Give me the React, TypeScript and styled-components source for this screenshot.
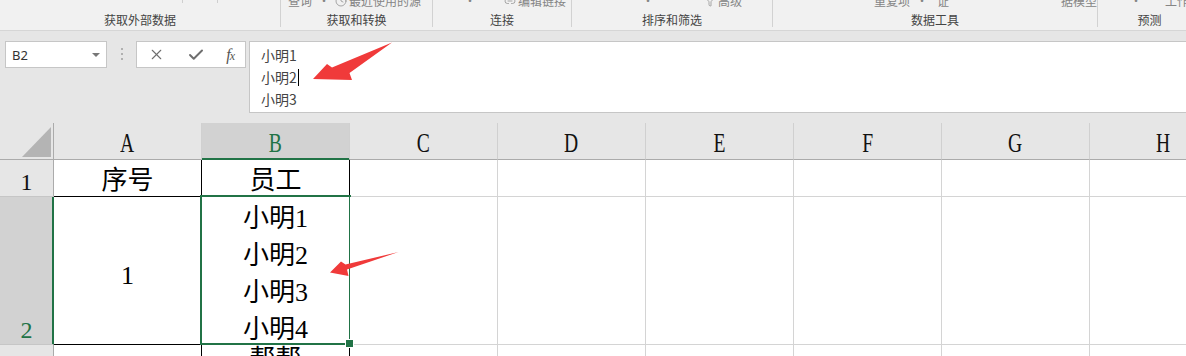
import React from "react";
import styled, { createGlobalStyle } from "styled-components";
import { X, Check, Clock, Link2, Filter } from "lucide-react";

const CJK = `"Noto Sans CJK SC", "Noto Sans", sans-serif`;
const UI = `"Noto Sans", "Noto Sans CJK SC", sans-serif`;
const SERIF = `"Liberation Serif", "Noto Sans CJK SC", serif`;
const GREEN = "#217346";

const GlobalStyle = createGlobalStyle`
  html, body { margin: 0; padding: 0; overflow: hidden; background: #e6e6e6; }
  #root { width: 1186px; height: 356px; overflow: hidden; }
  * { box-sizing: border-box; }
`;

const Page = styled.div`
  position: relative;
  width: 1186px;
  height: 356px;
  overflow: hidden;
  background: #e6e6e6;
  display: flex;
  flex-direction: column;
`;

/* ---------- Ribbon ---------- */
const Ribbon = styled.div`
  display: flex;
  height: 31px;
  flex-shrink: 0;
  background: #f1f1f1;
  border-bottom: 1px solid #d6d6d6;
`;

const Group = styled.div<{ $w?: number }>`
  ${(p) => (p.$w ? `width: ${p.$w}px; flex-shrink: 0;` : `flex: 1;`)}
  height: 27px;
  display: flex;
  flex-direction: column;
  border-right: ${(p) => (p.$w ? "1px solid #d2d2d2" : "none")};
`;

const TopRow = styled.div`
  height: 8px;
  overflow: hidden;
  display: flex;
  align-items: flex-end;
`;

const TopItem = styled.span<{ $ml: number }>`
  margin-left: ${(p) => p.$ml}px;
  flex-shrink: 0;
  display: flex;
  align-items: center;
  gap: 2px;
  font: 12px/14px ${CJK};
  color: #858585;
  white-space: nowrap;
`;

const TopTick = styled.span<{ $ml: number }>`
  margin-left: ${(p) => p.$ml}px;
  align-self: flex-start;
  width: 1px;
  height: 3px;
  background: #cfcfcf;
  flex-shrink: 0;
`;

const GroupLabel = styled.div`
  margin-top: 4px;
  font: 12px/15px ${CJK};
  color: #444;
  text-align: center;
  white-space: nowrap;
`;

/* ---------- Formula bar ---------- */
const FormulaArea = styled.div`
  display: flex;
  align-items: flex-start;
  height: 92px;
  flex-shrink: 0;
  padding: 10px 0 10px 5px;
`;

const NameBox = styled.div`
  width: 102px;
  height: 27px;
  background: #fff;
  border: 1px solid #c6c6c6;
  display: flex;
  align-items: center;
  justify-content: space-between;
  padding: 0 6px;
  font: 13px ${UI};
  color: #333;
`;

const Caret = styled.span`
  width: 0;
  height: 0;
  border-left: 4px solid transparent;
  border-right: 4px solid transparent;
  border-top: 4px solid #777;
`;

const Dots = styled.div`
  margin: 7px 13px 0 14px;
  display: flex;
  flex-direction: column;
  gap: 3px;
  & > span {
    width: 2px;
    height: 2px;
    background: #b0b0b0;
  }
`;

const ButtonBox = styled.div`
  width: 110px;
  height: 27px;
  background: #fff;
  border: 1px solid #c6c6c6;
  display: flex;
  align-items: center;
  justify-content: space-around;
  color: #6e6e6e;
`;

const Fx = styled.span`
  font: italic 16px ${SERIF};
  color: #555;
  letter-spacing: -1px;
  & > small {
    font-size: 12px;
  }
`;

const FormulaInput = styled.div`
  flex: 1;
  margin-left: 3px;
  height: 72px;
  background: #fff;
  border: 1px solid #c6c6c6;
  border-right: none;
  padding: 2px 11px 0;
  font: 14px/22px ${CJK};
  color: #444;
`;

const TextCursor = styled.span`
  display: inline-block;
  width: 1px;
  height: 17px;
  margin-left: 1px;
  background: #000;
  vertical-align: -3px;
`;

/* ---------- Sheet ---------- */
const Sheet = styled.div`
  display: grid;
  grid-template-columns: 54px repeat(8, 148px);
  grid-template-rows: 37px 37px 148px 37px;
  width: 1186px;
  flex-shrink: 0;
`;

const Corner = styled.div`
  background: #e6e6e6;
  border-right: 1px solid #ababab;
  border-bottom: 1px solid #ababab;
  display: flex;
  align-items: flex-end;
  justify-content: flex-end;
  padding: 0 2px 2px 0;
`;

const CornerTriangle = styled.div`
  width: 29px;
  height: 30px;
  background: #b4b4b4;
  clip-path: polygon(100% 0, 100% 100%, 0 100%);
`;

const ColHeader = styled.div<{ $sel?: boolean }>`
  background: ${(p) => (p.$sel ? "#d2d2d2" : "#e6e6e6")};
  border-right: 1px solid #d0d0d0;
  border-bottom: 1px solid ${(p) => (p.$sel ? GREEN : "#ababab")};
  box-shadow: ${(p) => (p.$sel ? `inset 0 -1px 0 ${GREEN}` : "none")};
  display: flex;
  align-items: center;
  justify-content: center;
  padding-top: 3px;
  font: 28px/30px ${SERIF};
  color: ${(p) => (p.$sel ? GREEN : "#111")};
`;

const HeaderLetter = styled.span`
  display: inline-block;
  transform: scaleX(0.7);
`;

const RowHeader = styled.div<{ $sel?: boolean }>`
  background: ${(p) => (p.$sel ? "#d2d2d2" : "#e6e6e6")};
  border-right: 1px solid ${(p) => (p.$sel ? GREEN : "#ababab")};
  border-bottom: 1px solid #c6c6c6;
  box-shadow: ${(p) => (p.$sel ? `inset -1px 0 0 ${GREEN}` : "none")};
  display: flex;
  align-items: flex-end;
  justify-content: center;
  font: 24px/28px ${SERIF};
  color: ${(p) => (p.$sel ? GREEN : "#111")};
`;

const Cell = styled.div<{
  $r?: string;
  $b?: string;
  $v?: "flex-start" | "center" | "flex-end";
  $lh?: number;
  $pt?: number;
}>`
  position: relative;
  background: #fff;
  border-right: 1px solid ${(p) => p.$r || "#d4d4d4"};
  border-bottom: 1px solid ${(p) => p.$b || "#d4d4d4"};
  display: flex;
  flex-direction: column;
  align-items: center;
  justify-content: ${(p) => p.$v || "flex-end"};
  padding-top: ${(p) => p.$pt || 0}px;
  font: 26px/${(p) => p.$lh || 31}px ${SERIF};
  color: #000;
  white-space: nowrap;
`;

const SelectedCell = styled(Cell)`
  &::after {
    content: "";
    position: absolute;
    top: -2px;
    left: -2px;
    right: -2px;
    bottom: -1px;
    border: 2px solid ${GREEN};
    pointer-events: none;
  }
  &::before {
    content: "";
    position: absolute;
    right: -5px;
    bottom: -4px;
    width: 7px;
    height: 7px;
    background: ${GREEN};
    border: 1px solid #fff;
    z-index: 2;
  }
`;

const CellLine = styled.div`
  line-height: 37px;
`;

/* ---------- Annotation overlay ---------- */
const Annotations = styled.svg`
  position: absolute;
  top: 0;
  left: 0;
  width: 1186px;
  height: 356px;
  pointer-events: none;
  z-index: 5;
`;

type TopEntry =
  | { kind: "tick"; ml: number }
  | { kind: "text"; ml: number; text: string; icon?: React.ReactNode };

const groups: { label: string; w?: number; items: TopEntry[] }[] = [
  {
    label: "获取外部数据",
    w: 281,
    items: [
      { kind: "tick", ml: 182 },
      { kind: "tick", ml: 34 },
    ],
  },
  {
    label: "获取和转换",
    w: 152,
    items: [
      { kind: "text", ml: 7, text: "查询" },
      { kind: "text", ml: 6, text: "·" },
      { kind: "text", ml: 5, text: "最近使用的源", icon: <Clock size={12} strokeWidth={1.4} /> },
    ],
  },
  {
    label: "连接",
    w: 139,
    items: [
      { kind: "text", ml: 31, text: "·" },
      { kind: "text", ml: 28, text: "编辑链接", icon: <Link2 size={12} strokeWidth={1.4} /> },
    ],
  },
  {
    label: "排序和筛选",
    w: 201,
    items: [
      { kind: "text", ml: 70, text: "·" },
      { kind: "text", ml: 50, text: "高级", icon: <Filter size={12} strokeWidth={1.4} /> },
    ],
  },
  {
    label: "数据工具",
    w: 325,
    items: [
      { kind: "text", ml: 101, text: "重复项" },
      { kind: "text", ml: 6, text: "·" },
      { kind: "text", ml: 9, text: "证" },
      { kind: "text", ml: 112, text: "据模型" },
    ],
  },
  {
    label: "预测",
    items: [
      { kind: "text", ml: 32, text: "·" },
      { kind: "text", ml: 23, text: "工作表" },
    ],
  },
];

const emptyCols = ["C", "D", "E", "F", "G", "H"];
const BLACK = "#000";

export default function App() {
  return (
    <Page>
      <GlobalStyle />
      <Ribbon>
        {groups.map((g) => (
          <Group key={g.label} $w={g.w}>
            <TopRow>
              {g.items.map((it, i) =>
                it.kind === "tick" ? (
                  <TopTick key={i} $ml={it.ml} />
                ) : (
                  <TopItem key={i} $ml={it.ml}>
                    {it.icon}
                    {it.text}
                  </TopItem>
                )
              )}
            </TopRow>
            <GroupLabel>{g.label}</GroupLabel>
          </Group>
        ))}
      </Ribbon>

      <FormulaArea>
        <NameBox>
          <span>B2</span>
          <Caret />
        </NameBox>
        <Dots>
          <span />
          <span />
          <span />
        </Dots>
        <ButtonBox>
          <X size={17} strokeWidth={1.5} />
          <Check size={18} strokeWidth={2.6} />
          <Fx>
            f<small>x</small>
          </Fx>
        </ButtonBox>
        <FormulaInput>
          <div>小明1</div>
          <div>
            小明2
            <TextCursor />
          </div>
          <div>小明3</div>
        </FormulaInput>
      </FormulaArea>

      <Sheet>
        <Corner>
          <CornerTriangle />
        </Corner>
        <ColHeader>
          <HeaderLetter>A</HeaderLetter>
        </ColHeader>
        <ColHeader $sel>
          <HeaderLetter>B</HeaderLetter>
        </ColHeader>
        {emptyCols.map((c) => (
          <ColHeader key={c}>
            <HeaderLetter>{c}</HeaderLetter>
          </ColHeader>
        ))}

        <RowHeader>1</RowHeader>
        <Cell $r={BLACK} $b={BLACK}>序号</Cell>
        <Cell $r={BLACK} $b={BLACK}>员工</Cell>
        {emptyCols.map((c) => (
          <Cell key={c} />
        ))}

        <RowHeader $sel>2</RowHeader>
        <Cell $r={BLACK} $b={BLACK} $v="center" $pt={9}>
          1
        </Cell>
        <SelectedCell $r={BLACK} $b={BLACK} $v="flex-start" $pt={3}>
          <CellLine>小明1</CellLine>
          <CellLine>小明2</CellLine>
          <CellLine>小明3</CellLine>
          <CellLine>小明4</CellLine>
        </SelectedCell>
        {emptyCols.map((c) => (
          <Cell key={c} />
        ))}

        <RowHeader>3</RowHeader>
        <Cell $r={BLACK} />
        <Cell $r={BLACK} $v="flex-start" $lh={30}>
          帮帮
        </Cell>
        {emptyCols.map((c) => (
          <Cell key={c} />
        ))}
      </Sheet>

      <Annotations viewBox="0 0 1186 356">
        <polygon
          points="313,79 327,64 332,67.5 392,42.5 349.5,73 352,80"
          fill="#f03a3a"
        />
        <polygon
          points="330,272.5 341,261.5 345.5,264.5 398.5,252 347,269.5 348.5,276"
          fill="#f03a3a"
        />
      </Annotations>
    </Page>
  );
}
